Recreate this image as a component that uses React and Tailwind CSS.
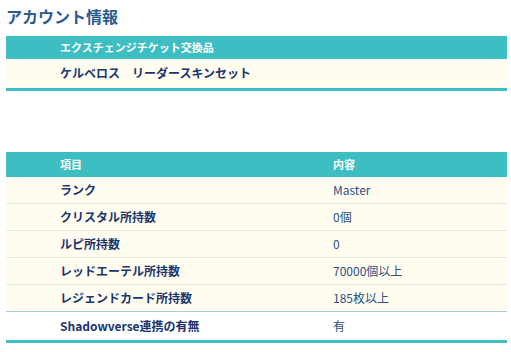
export default function App() {
  const rows = [
    ["ランク", "Master"],
    ["クリスタル所持数", "0個"],
    ["ルピ所持数", "0"],
    ["レッドエーテル所持数", "70000個以上"],
    ["レジェンドカード所持数", "185枚以上"],
  ];
  const font = { fontFamily: '"Noto Sans CJK JP", "Noto Sans", sans-serif' };
  return (
    <div className="w-[511px] h-[352px] bg-white" style={font}>
      <div className="px-[6px] pr-[4px]">
        <h1 className="h-[36px] pt-[5px] text-[16px] leading-[22px] font-bold text-[#2a5c93]">アカウント情報</h1>
        <div className="h-[23px] bg-[#3dbec3] flex items-center pl-[54px] text-[11px] font-bold text-white">
          エクスチェンジチケット交換品
        </div>
        <div className="h-[28px] bg-[#fffdf0] flex items-center pl-[54px] text-[12px] font-bold text-[#1a3570]">
          ケルベロス　リーダースキンセット
        </div>
        <div className="h-[1px]" />
        <div className="h-[3px] bg-[#3dbec3]" />

        <div className="h-[61px]" />

        <div className="h-[25px] bg-[#3dbec3] flex items-center text-[11px] font-bold text-white">
          <div className="w-[327px] pl-[54px]">項目</div>
          <div>内容</div>
        </div>
        {rows.map(([k, v], i) => (
          <div
            key={k}
            className={
              "h-[27px] bg-[#fffdf0] flex items-center text-[12px] " +
              (i < rows.length - 1 ? "border-b border-dotted border-[#d4d4d4]" : "border-b border-[#a6cfd0]")
            }
          >
            <div className="w-[327px] pl-[54px] font-bold text-[#1a3570]">{k}</div>
            <div className="text-[#2d4f88]">{v}</div>
          </div>
        ))}
        <div className="h-[27px] bg-white flex items-center text-[12px]">
          <div className="w-[327px] pl-[54px] font-bold text-[#1a3570]">Shadowverse連携の有無</div>
          <div className="text-[#2d4f88]">有</div>
        </div>
        <div className="h-[1px]" />
        <div className="h-[3px] bg-[#3dbec3]" />
      </div>
    </div>
  );
}
